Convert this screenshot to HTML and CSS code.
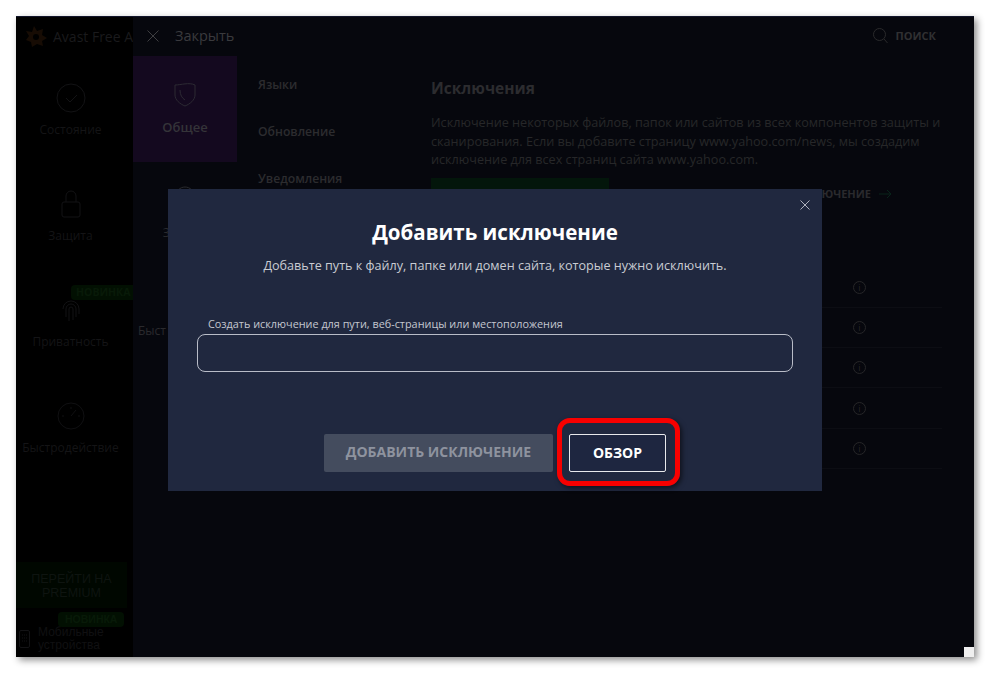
FILE: index.html
```html
<!DOCTYPE html>
<html lang="ru">
<head>
    <meta charset="UTF-8">
    <meta name="viewport" content="width=device-width, initial-scale=1.0">
    <title>Добавить исключение</title>
    <link rel="stylesheet" href="styles.css">
</head>
<body>
    <div class="window">
        <aside class="sidebar">
            <div class="brand">
                <svg class="brand-logo" width="22" height="23" viewBox="0 0 22 23"><path d="M9 1l3 5 6-2-1 6 5 3-5 3 1 5-6-2-5 3-1-5-5-2 3-4-3-5 6 1z" fill="#170c04"/><circle cx="11" cy="12" r="3" fill="#000"/></svg>
                <span class="brand-name">Avast Free A</span>
            </div>
            <div class="side-item">
                <svg width="30" height="30" viewBox="0 0 30 30" fill="none" stroke="#131315"><circle cx="15" cy="15" r="14"/><path d="M10 15l4 4 7-7"/></svg>
                <span>Состояние</span>
            </div>
            <div class="side-item">
                <svg width="30" height="30" viewBox="0 0 30 30" fill="none" stroke="#131315"><rect x="6" y="13" width="18" height="15" rx="2"/><path d="M10 13V7a5 5 0 0 1 10 0v6"/></svg>
                <span>Защита</span>
            </div>
            <div class="side-item">
                <span class="new-badge new-badge-top">НОВИНКА</span>
                <svg width="30" height="30" viewBox="0 0 30 30" fill="none" stroke="#121214"><path d="M7 14a8 8 0 0 1 16 0v5M10 22v-8a5 5 0 0 1 10 0v8M13 26v-12a2 2 0 0 1 4 0v11"/></svg>
                <span>Приватность</span>
            </div>
            <div class="side-item">
                <svg width="30" height="30" viewBox="0 0 30 30" fill="none" stroke="#101012"><circle cx="15" cy="15" r="13"/><path d="M15 15l5-6M6 15h2M22 15h2M15 6v2"/></svg>
                <span>Быстродействие</span>
            </div>
            <div class="side-bottom">
                <div class="premium">ПЕРЕЙТИ НА PREMIUM</div>
                <span class="new-badge new-badge-low">НОВИНКА</span>
                <div class="mobile">
                    <svg width="11" height="18" viewBox="0 0 11 18" fill="none" stroke="#131315"><rect x="0.5" y="0.5" width="10" height="17" rx="1.5"/><path d="M3 5h5M3 8h5M3 11h5" stroke-dasharray="1 1"/></svg>
                    <span>Мобильные устройства</span>
                </div>
            </div>
        </aside>

        <div class="settings">
            <div class="settings-top">
                <div class="close-link">
                    <svg width="12" height="12" viewBox="0 0 12 12" stroke="#3e3e41" fill="none"><path d="M0.5 0.5l11 11M11.5 0.5l-11 11"/></svg>
                    <span>Закрыть</span>
                </div>
                <div class="search">
                    <svg width="15" height="16" viewBox="0 0 15 16" fill="none" stroke="#2a2a2c"><circle cx="6.5" cy="6.5" r="6"/><path d="M11 11l3.5 4"/></svg>
                    <span>ПОИСК</span>
                </div>
            </div>
            <div class="settings-body">
                <nav class="cat-col">
                    <div class="cat-item cat-active">
                        <svg width="22" height="25" viewBox="0 0 22 25" fill="none" stroke="#2c2a33"><path d="M1 3c6 0 14-3 20 0v10c0 5-5 9-10 11C6 22 1 18 1 13z"/><path d="M6 8c0 5 2 8 5 10"/></svg>
                        <span>Общее</span>
                    </div>
                    <div class="cat-item cat-icon">
                        <svg width="22" height="25" viewBox="0 0 22 25" fill="none" stroke="#2a2a2d"><path d="M11 1c5 0 9 4 9 9v13H2V10c0-5 4-9 9-9z"/></svg>
                        <span>Защита</span>
                    </div>
                    <div class="cat-item cat-cut">Быст</div>
                </nav>
                <nav class="sub-col">
                    <div>Языки</div>
                    <div>Обновление</div>
                    <div>Уведомления</div>
                </nav>
                <main class="content">
                    <h2>Исключения</h2>
                    <p>Исключение некоторых файлов, папок или сайтов из всех компонентов защиты и сканирования. Если вы добавите страницу www.yahoo.com/news, мы создадим исключение для всех страниц сайта www.yahoo.com.</p>
                    <div class="content-actions">
                        <div class="green-btn"></div>
                        <div class="text-link">
                            <span>ИСКЛЮЧЕНИЕ</span>
                            <svg width="13" height="10" viewBox="0 0 13 10" fill="none" stroke="#08241a"><path d="M0 5h12M8 1l4 4-4 4"/></svg>
                        </div>
                    </div>
                    <div class="rows">
                        <div class="row"><span class="info">i</span></div>
                        <div class="row"><span class="info">i</span></div>
                        <div class="row"><span class="info">i</span></div>
                        <div class="row"><span class="info">i</span></div>
                        <div class="row"><span class="info">i</span></div>
                    </div>
                </main>
            </div>
        </div>

        <span class="corner"></span>

        <section class="modal">
            <svg class="modal-close" width="10" height="10" viewBox="0 0 10 10" stroke="#aeb2bd" fill="none"><path d="M0.5 0.5l9 9M9.5 0.5l-9 9"/></svg>
            <h1>Добавить исключение</h1>
            <p class="modal-sub">Добавьте путь к файлу, папке или домен сайта, которые нужно исключить.</p>
            <label class="field-label">Создать исключение для пути, веб-страницы или местоположения</label>
            <div class="field"></div>
            <div class="modal-actions">
                <div class="btn btn-disabled">ДОБАВИТЬ ИСКЛЮЧЕНИЕ</div>
                <div class="browse-wrap">
                    <div class="btn btn-browse">ОБЗОР</div>
                    <span class="ring"></span>
                </div>
            </div>
        </section>
    </div>
</body>
</html>
```

FILE: styles.css
```css
* {
    margin: 0;
    padding: 0;
    box-sizing: border-box;
}
body {
    background: #fff;
    width: 990px;
    height: 673px;
    padding: 16px;
    overflow: hidden;
    font-family: 'Open Sans', 'Liberation Sans', sans-serif;
}
.window {
    position: relative;
    display: flex;
    width: 958px;
    height: 641px;
    background: #06070d;
    border-top: 1px solid #11152a;
    box-shadow: 3px 3px 7px rgba(0, 0, 0, 0.45);
}

/* Боковая панель */
.sidebar {
    width: 117px;
    height: 640px;
    flex: none;
    display: flex;
    flex-direction: column;
    background: #000;
    overflow: hidden;
}
.brand {
    height: 39px;
    flex: none;
    display: flex;
    align-items: center;
    padding-left: 9px;
    gap: 6px;
    white-space: nowrap;
}
.brand-logo {
    flex: none;
}
.brand-name {
    font-size: 14px;
    color: #1a1a1c;
}
.side-item {
    position: relative;
    width: 109px;
    height: 106px;
    flex: none;
    display: flex;
    flex-direction: column;
    align-items: center;
    padding-top: 27px;
    gap: 8px;
    font-size: 12px;
    color: #141416;
    white-space: nowrap;
}
.new-badge {
    position: absolute;
    display: block;
    height: 15px;
    line-height: 15px;
    border-radius: 4px;
    background: #021002;
    color: #081a08;
    font-size: 10.5px;
    font-weight: 700;
}
.new-badge-top {
    left: 55px;
    top: 17px;
    width: 62px;
    padding-left: 5px;
    border-radius: 4px 0 0 4px;
}
.new-badge-low {
    left: 42px;
    top: 50px;
    padding: 0 7px;
}
.side-bottom {
    position: relative;
    margin-top: auto;
    height: 95px;
    font-family: 'Liberation Sans', sans-serif;
}
.premium {
    width: 111px;
    height: 46px;
    margin-bottom: 21px;
    padding: 10px 12px 0;
    background: #000700;
    color: #0e1410;
    font-size: 12.5px;
    line-height: 14px;
    text-align: center;
}
.mobile {
    display: flex;
    align-items: center;
    gap: 8px;
    padding-left: 3px;
    margin-top: -3px;
    font-size: 12px;
    line-height: 13px;
    color: #101012;
}
.mobile span {
    width: 72px;
}

/* Настройки */
.settings {
    flex: 1;
    display: flex;
    flex-direction: column;
}
.settings-top {
    height: 39px;
    display: flex;
    align-items: center;
    justify-content: space-between;
    padding: 0 38px 2px 14px;
}
.close-link {
    display: flex;
    align-items: center;
    gap: 16px;
    font-size: 14.5px;
    color: #3a3a3d;
}
.search {
    display: flex;
    align-items: center;
    gap: 8px;
    font-size: 11px;
    font-weight: 700;
    color: #303032;
}
.settings-body {
    flex: 1;
    display: flex;
}
.cat-col {
    width: 104px;
    flex: none;
}
.cat-item {
    height: 98px;
    display: flex;
    flex-direction: column;
    align-items: center;
    padding-top: 62px;
    font-size: 12px;
    line-height: 18px;
    color: #2a2a2d;
    white-space: nowrap;
}
.cat-icon {
    padding-top: 24px;
    gap: 13px;
}
.cat-cut {
    align-items: flex-start;
    padding-left: 5px;
}
.cat-active {
    height: 106px;
    justify-content: center;
    gap: 11px;
    padding-top: 0;
    background: #14091f;
    font-size: 13px;
    font-weight: 600;
    color: #353439;
}
.sub-col {
    width: 194px;
    flex: none;
    padding: 20px 0 0 21px;
    font-size: 12.2px;
    font-weight: 600;
    color: #2c2c2f;
}
.sub-col div {
    height: 47px;
}
.content {
    flex: 1;
    padding: 21px 32px 0 0;
}
.content h2 {
    font-size: 15.5px;
    line-height: 22px;
    font-weight: 700;
    color: #2c2c2f;
    margin-bottom: 14px;
}
.content p {
    font-size: 12.65px;
    line-height: 18.5px;
    color: #272729;
}
.content-actions {
    display: flex;
    align-items: center;
    justify-content: space-between;
    margin-top: 9px;
    padding-right: 50px;
}
.green-btn {
    width: 178px;
    height: 38px;
    background: #03160b;
}
.text-link {
    display: flex;
    align-items: center;
    gap: 8px;
    margin-top: -6px;
    font-size: 11px;
    font-weight: 700;
    color: #2a2a2d;
}
.rows {
    margin-top: 52px;
}
.row {
    height: 40.3px;
    border-bottom: 1px solid #0c0d13;
    display: flex;
    align-items: center;
    padding-left: 422px;
}
.info {
    width: 13px;
    height: 13px;
    border: 1px solid #262628;
    border-radius: 50%;
    font-size: 9px;
    line-height: 11px;
    text-align: center;
    color: #262628;
}
.corner {
    position: absolute;
    right: 0;
    bottom: 0;
    width: 10px;
    height: 10px;
    background: #efefef;
}

/* Диалог */
.modal {
    position: absolute;
    left: 152px;
    top: 172px;
    width: 654px;
    height: 302px;
    background: #20283f;
    text-align: center;
    padding-top: 29px;
}
.modal-close {
    position: absolute;
    right: 12px;
    top: 11px;
}
.modal h1 {
    font-size: 20.5px;
    line-height: 28px;
    font-weight: 700;
    color: #fff;
}
.modal-sub {
    margin-top: 11px;
    font-size: 12.6px;
    line-height: 18px;
    color: #c9ccd3;
}
.field-label {
    display: block;
    margin: 42px 0 0 40px;
    text-align: left;
    font-size: 10.85px;
    line-height: 14px;
    color: #c4c7cf;
}
.field {
    width: 596px;
    height: 38px;
    margin: 3px 0 0 29px;
    border: 1px solid #b9bdc8;
    border-radius: 8px;
}
.modal-actions {
    display: flex;
    gap: 16px;
    margin-top: 62px;
    padding-left: 156px;
}
.btn {
    height: 38px;
    line-height: 36px;
    font-size: 14px;
    font-weight: 700;
    text-align: center;
    border-radius: 2px;
}
.btn-disabled {
    width: 229px;
    background: #444c5e;
    color: #8e939f;
}
.btn-browse {
    width: 97px;
    background: #1e2640;
    border: 1px solid #e8e9ec;
    color: #fff;
}
.browse-wrap {
    position: relative;
}
.ring {
    position: absolute;
    left: -12px;
    right: -14px;
    top: -16px;
    bottom: -14px;
    border: 5px solid #f80000;
    border-radius: 13px;
    box-shadow: 2px 2px 5px rgba(0, 0, 0, 0.55);
}
```
